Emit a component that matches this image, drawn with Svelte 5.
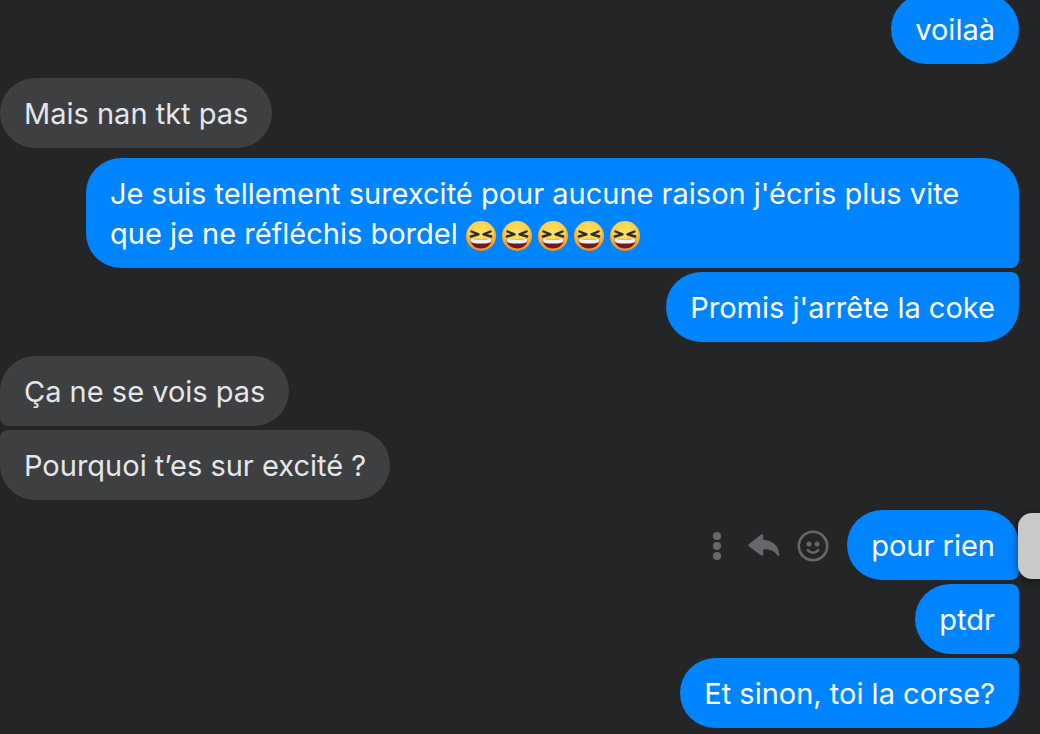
<script>
  const messages = [
    { from: 'me', text: 'voilaà' },
    { from: 'them', text: 'Mais nan tkt pas', space: 'wide' },
    {
      from: 'me',
      text: "Je suis tellement surexcité pour aucune raison j'écris plus vite que je ne réfléchis bordel ",
      laughs: 5,
      space: 'medium',
      joinBelow: true
    },
    { from: 'me', text: "Promis j'arrête la coke", space: 'tight', joinAbove: true },
    { from: 'them', text: 'Ça ne se vois pas', space: 'wide', joinBelow: true },
    { from: 'them', text: 'Pourquoi t’es sur excité ?', space: 'tight', joinAbove: true },
    { from: 'me', text: 'pour rien', space: 'medium', joinBelow: true, active: true },
    { from: 'me', text: 'ptdr', space: 'tight', joinAbove: true, joinBelow: true },
    { from: 'me', text: 'Et sinon, toi la corse?', space: 'tight', joinAbove: true }
  ];
</script>

<svg class="defs" aria-hidden="true">
  <defs>
    <radialGradient id="face" cx="50%" cy="36%" r="64%">
      <stop offset="0" stop-color="#ffe36a" />
      <stop offset=".6" stop-color="#ffd044" />
      <stop offset="1" stop-color="#f5861c" />
    </radialGradient>
  </defs>
</svg>

<main class="chat">
  {#each messages as m}
    <div class="row {m.from} {m.space ?? ''}">
      {#if m.active}
        <div class="actions">
          <button type="button" aria-label="Plus">
            <svg viewBox="0 0 32 32">
              <circle cx="16" cy="6" r="4.1" />
              <circle cx="16" cy="16" r="4.1" />
              <circle cx="16" cy="26" r="4.1" />
            </svg>
          </button>
          <button type="button" aria-label="Répondre">
            <svg viewBox="0 0 32 32">
              <path d="M-.3 14.200 11.800 4.700Q14.300 3.300 14.300 6V9.700C23 10.200 30.200 15.500 30.200 24.700Q30 27.200 28.300 25.300C25 20.500 20.500 19.300 14.300 19.300V23.800Q14.300 26.800 11.800 25.300L-.3 16.200Q-1.300 15.200-.3 14.200Z" />
            </svg>
          </button>
          <button type="button" aria-label="Réagir">
            <svg viewBox="0 0 32 32">
              <circle class="line" cx="16" cy="16" r="14.200" />
              <circle cx="12" cy="14" r="2.500" />
              <circle cx="20" cy="14" r="2.500" />
              <path class="line" d="M10.800 20.200C13.500 23.500 18.500 23.500 21.200 20.200" />
            </svg>
          </button>
        </div>
      {/if}
      <p class="bubble" class:above={m.joinAbove} class:below={m.joinBelow}>
        {m.text}{#if m.laughs}<span class="laughs" role="img" aria-label="Rires">
            {#each Array(m.laughs) as _}
              <svg viewBox="0 0 30 30">
                <circle cx="15" cy="15" r="15" fill="url(#face)" />
                <path class="eye" d="M5.500 10.500 12.500 13.300 4.800 15.500M24.500 10.500 17.500 13.300 25.200 15.500" />
                <path d="M4.200 17.500Q15 20 25.800 17.500C25.800 23.500 21.300 27.500 15 27.500S4.200 23.500 4.200 17.500Z" fill="#6e1a20" />
                <path d="M4.400 17.500Q15 20 25.600 17.500C25.800 20.300 24.500 21.800 22.800 22Q15 23 7.200 22C5.500 21.800 4.200 20.300 4.400 17.500Z" fill="#f1f2f7" />
              </svg>
            {/each}
          </span>{/if}
      </p>
      {#if m.active}
        <div class="drawer" aria-hidden="true"></div>
      {/if}
    </div>
  {/each}
</main>

<style>
  :global(body) {
    margin: 0;
    background: #242527;
  }

  .defs {
    position: absolute;
    width: 0;
    height: 0;
  }

  .chat {
    box-sizing: border-box;
    display: flex;
    flex-direction: column;
    overflow: hidden;
    padding: 0 21px 6px 0;
    font: 400 29px/40px Inter, "Liberation Sans", sans-serif;
  }

  .row {
    position: relative;
    display: flex;
    align-items: center;
  }

  .row:first-child {
    margin-top: -6px;
  }

  .me {
    justify-content: flex-end;
  }

  .wide {
    margin-top: 14px;
  }

  .medium {
    margin-top: 10px;
  }

  .tight {
    margin-top: 4px;
  }

  .bubble {
    box-sizing: border-box;
    max-width: calc(100% - 86px);
    margin: 0;
    padding: 16px 24px 14px;
    border-radius: 35px;
  }

  .me .bubble {
    background: #0084ff;
    color: #fff;
  }

  .them .bubble {
    background: #3e3f41;
    color: #e4e6eb;
  }

  .me .above {
    border-top-right-radius: 8px;
  }

  .me .below {
    border-bottom-right-radius: 8px;
  }

  .them .above {
    border-top-left-radius: 8px;
  }

  .them .below {
    border-bottom-left-radius: 8px;
  }

  .laughs {
    display: inline-flex;
    gap: 6px;
    vertical-align: -7px;
  }

  .laughs svg {
    width: 30px;
    height: 30px;
  }

  .eye {
    fill: none;
    stroke: #2b2a33;
    stroke-width: 2.4;
    stroke-linecap: round;
    stroke-linejoin: round;
  }

  .actions {
    display: flex;
    gap: 16px;
    margin-right: 18px;
    padding-top: 2px;
  }

  button {
    width: 32px;
    height: 32px;
    padding: 0;
    border: 0;
    background: none;
    cursor: pointer;
  }

  button svg {
    display: block;
    width: 32px;
    height: 32px;
    overflow: visible;
    fill: #65676a;
  }

  .line {
    fill: none;
    stroke: #65676a;
    stroke-width: 2.6;
    stroke-linecap: round;
  }

  .drawer {
    position: absolute;
    top: 3px;
    right: -21px;
    width: 22px;
    height: 66px;
    border-radius: 14px 0 0 14px;
    background: #c9c9c9;
    box-shadow: 0 2px 8px rgba(0, 0, 0, 0.5);
  }
</style>
